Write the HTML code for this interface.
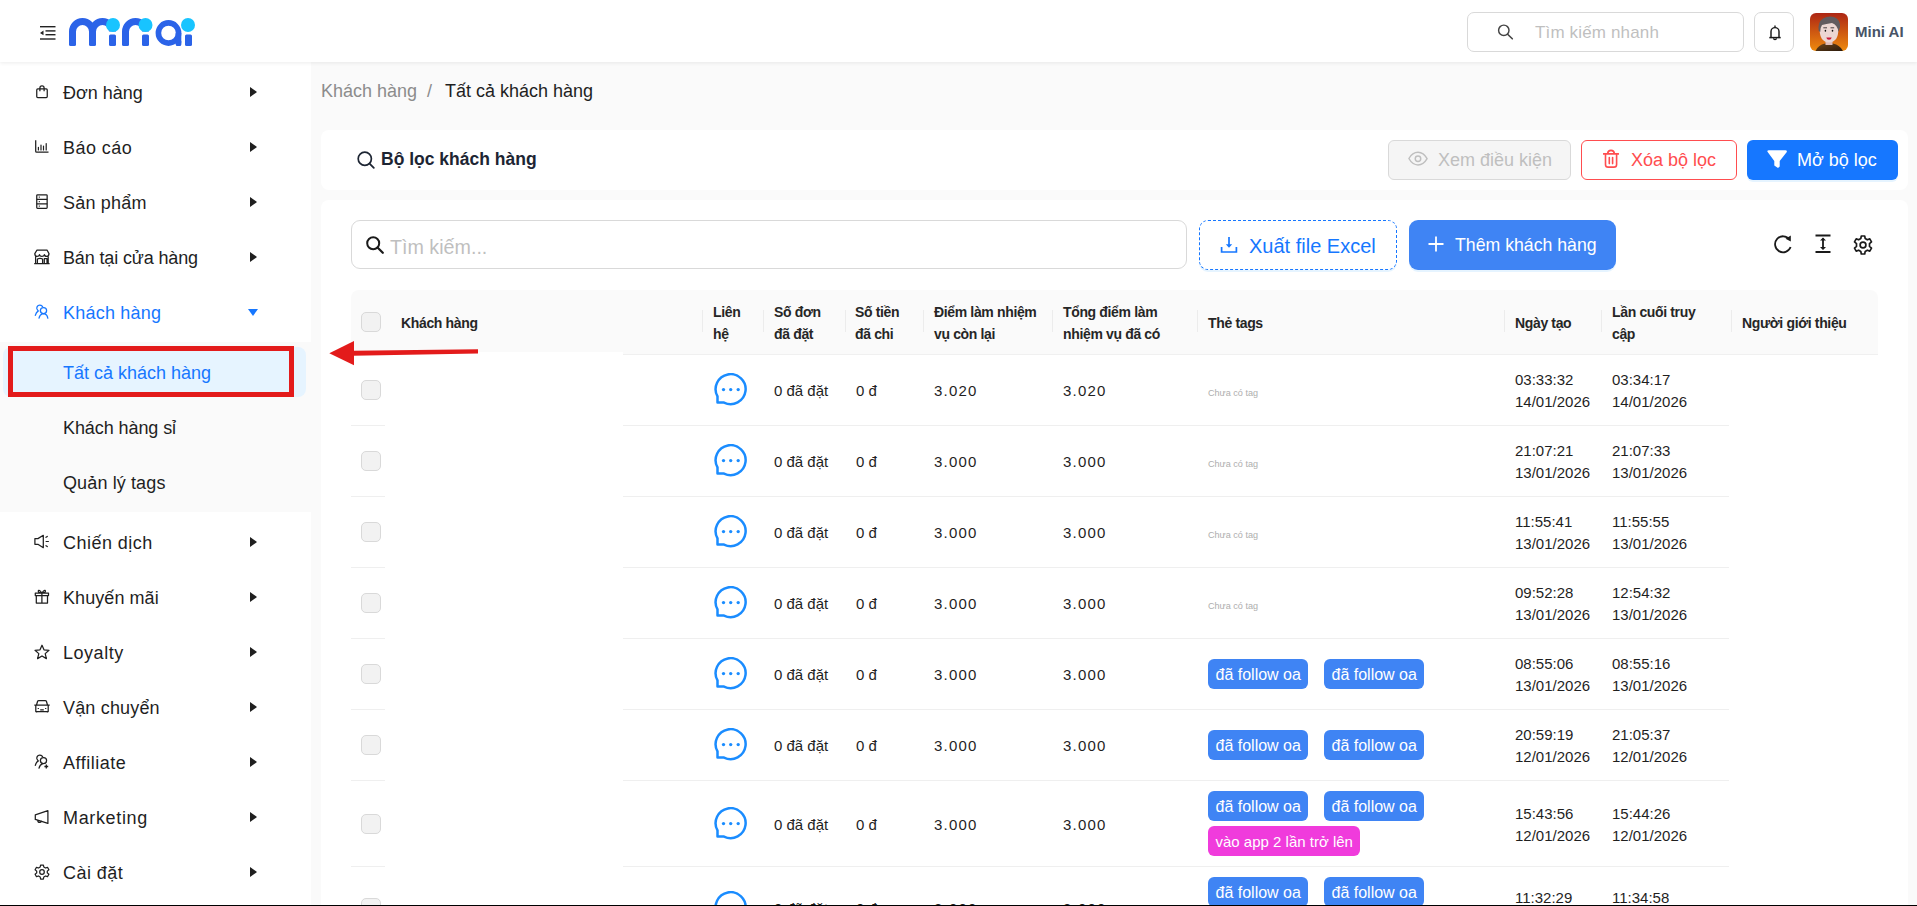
<!DOCTYPE html>
<html><head><meta charset="utf-8">
<style>
*{box-sizing:border-box;margin:0;padding:0}
html,body{width:1917px;height:906px;overflow:hidden;background:#fafafa;font-family:"Liberation Sans",sans-serif;color:#1f1f1f}
.a{position:absolute}
#top{left:0;top:0;width:1917px;height:62px;background:#fff;box-shadow:0 1px 4px rgba(0,0,0,0.08);z-index:5}
#side{left:0;top:62px;width:311px;height:844px;background:#fff}
.mi{position:absolute;left:0;width:311px;height:50px;line-height:50px;font-size:18px;color:#1f1f1f;white-space:nowrap}
.mi .t{position:absolute;left:63px;top:1px}
.mi svg.ic{position:absolute;left:34px;top:17px}
.car{position:absolute;left:250px;top:19.5px;width:0;height:0;border-top:5.5px solid transparent;border-bottom:5.5px solid transparent;border-left:7px solid #1f1f1f}
.card{position:absolute;background:#fff;border-radius:8px}
.btn{position:absolute;height:40px;border-radius:6px;font-size:18px;line-height:38px;white-space:nowrap}
.th{position:absolute;font-size:14px;letter-spacing:-0.35px;font-weight:bold;line-height:22px;color:#262626;white-space:nowrap}
.sep{position:absolute;top:310px;width:1px;height:22px;background:#ececec}
.rb{position:absolute;height:1px;background:#efefef}
.td{position:absolute;font-size:15px;line-height:22px;color:#1f1f1f;white-space:nowrap}
.cb{position:absolute;left:361px;width:20px;height:20px;border:1px solid #d9d9d9;background:#f2f2f2;border-radius:5px}
.tag{position:absolute;height:30px;line-height:32px;border-radius:6px;background:#3f84f4;color:#fff;font-size:16px;padding:0 7.5px;white-space:nowrap}
.nt{position:absolute;left:1208px;font-size:9.1px;color:#aeaeae;white-space:nowrap}
</style></head><body>

<!-- TOP BAR -->
<div id="top" class="a">
  <svg class="a" style="left:40px;top:26px" width="16" height="14" viewBox="0 0 16 14">
    <rect x="0" y="0" width="15.5" height="1.4" fill="#222"/>
    <rect x="5.5" y="4.2" width="10" height="1.4" fill="#222"/>
    <rect x="5.5" y="8" width="10" height="1.4" fill="#222"/>
    <rect x="0" y="12.3" width="15.5" height="1.4" fill="#222"/>
    <path d="M0 6.9 L3.5 4.6 L3.5 9.2Z" fill="#222"/>
  </svg>
  <!-- logo -->
  <svg class="a" style="left:66px;top:14px" width="132" height="36" viewBox="0 0 132 36">
    <g fill="none" stroke="#2b63e8" stroke-width="7">
      <path d="M6.5 30.5 V17.5 A10 10 0 0 1 26.5 17.5 V30.5"/>
      <path d="M26.5 17.5 A10 10 0 0 1 46.5 17.5"/>
      <path d="M59.5 30.5 V17.5 A10 10 0 0 1 79.5 17.5"/>
      <circle cx="102.5" cy="19" r="10.1" stroke-width="5.6"/>
      <path d="M112.5 19 V29.5" stroke-width="5.6"/>
    </g>
    <g fill="#2b63e8">
      <rect x="3" y="26" width="7" height="6" rx="1.5"/>
      <rect x="23" y="26" width="7" height="6" rx="1.5"/>
      <rect x="56" y="26" width="7" height="6" rx="1.5"/>
      <rect x="109.7" y="26" width="5.6" height="6" rx="1.5"/>
      <rect x="43" y="20.5" width="7" height="11.5" rx="1.5"/>
      <rect x="76" y="20.5" width="7" height="11.5" rx="1.5"/>
      <rect x="119" y="20.5" width="7" height="11.5" rx="1.5"/>
    </g>
    <g fill="#18c4ff">
      <circle cx="47" cy="11" r="7"/>
      <circle cx="79.5" cy="11" r="7"/>
      <circle cx="122" cy="11" r="7"/>
    </g>
  </svg>
  <!-- search -->
  <div class="a" style="left:1467px;top:12px;width:277px;height:40px;border:1px solid #d9d9d9;border-radius:7px;background:#fff"></div>
  <svg class="a" style="left:1497px;top:24px" width="17" height="16" viewBox="0 0 17 16">
    <circle cx="6.8" cy="6.3" r="5.2" fill="none" stroke="#444" stroke-width="1.45"/>
    <path d="M10.6 10.2 L15.3 14.8" stroke="#444" stroke-width="1.6" stroke-linecap="round"/>
  </svg>
  <div class="a" style="left:1535px;top:20.5px;font-size:17px;letter-spacing:0.15px;line-height:24px;color:#bfbfbf;white-space:nowrap">Tìm kiếm nhanh</div>
  <!-- bell -->
  <div class="a" style="left:1754px;top:12px;width:40px;height:40px;border:1px solid #d9d9d9;border-radius:7px;background:#fff"></div>
  <svg class="a" style="left:1766px;top:23px" width="18" height="20" viewBox="0 0 18 20">
    <path d="M5 14.5 V8.6 A4 4 0 0 1 13 8.6 V14.5" fill="none" stroke="#1a1a1a" stroke-width="1.45"/>
    <path d="M3.3 14.6 H14.7" stroke="#1a1a1a" stroke-width="1.5"/>
    <path d="M9 2.6 V4.6" stroke="#1a1a1a" stroke-width="1.4"/>
    <path d="M7.6 15.2 A1.4 1.4 0 0 0 10.4 15.2" fill="none" stroke="#1a1a1a" stroke-width="1.3"/>
  </svg>
  <!-- avatar -->
  <svg class="a" style="left:1810px;top:13px" width="38" height="38" viewBox="0 0 38 38">
    <defs>
      <linearGradient id="ag" x1="0" y1="0" x2="0" y2="1"><stop offset="0" stop-color="#ad2614"/><stop offset="1" stop-color="#ee8a0e"/></linearGradient>
      <linearGradient id="sh" x1="0" y1="0" x2="1" y2="1"><stop offset="0" stop-color="#6e4519"/><stop offset="1" stop-color="#2b1a0c"/></linearGradient>
      <clipPath id="ac"><rect x="0" y="0" width="38" height="38" rx="6"/></clipPath>
    </defs>
    <g clip-path="url(#ac)">
      <rect width="38" height="38" fill="url(#ag)"/>
      <path d="M5.5 38 Q8 32 15 30.5 H23 Q30 32 33 38 Z" fill="url(#sh)"/>
      <rect x="15.5" y="26" width="7" height="6" fill="#e0bdb9"/>
      <path d="M9.6 16 Q9.6 29 19 29.5 Q28.4 29 28.4 16 Q28 9 19 9 Q10 9 9.6 16Z" fill="#ecd6d3"/>
      <path d="M8.7 18 Q7.5 9 13 5.5 Q19 2 25 4.5 Q30.5 7 30 14 L28.5 19 Q27.5 12 22 10 Q16 11 12 12 Q10.5 14 10.2 19 Z" fill="#625b5f"/>
      <path d="M13.3 14.8 H17 M20.5 14.8 H24.2" stroke="#4a3f42" stroke-width="1"/>
      <ellipse cx="15.4" cy="17.8" rx="0.8" ry="1" fill="#111"/>
      <ellipse cx="22.5" cy="17.8" rx="0.8" ry="1" fill="#111"/>
      <path d="M16.3 24.6 H21.7 Q21.3 26.8 19 26.8 Q16.7 26.8 16.3 24.6Z" fill="#c8193a"/>
    </g>
  </svg>
  <div class="a" style="left:1855px;top:20px;font-size:15px;font-weight:bold;line-height:24px;color:#485466;white-space:nowrap">Mini AI</div>
</div>

<!-- SIDEBAR -->
<div id="side" class="a"></div>
<div class="a" style="left:0;top:342px;width:311px;height:170px;background:#fafafa"></div>
<div class="a" style="left:3px;top:347px;width:303px;height:50px;background:#e6f4ff;border-radius:8px"></div>
<div class="mi" style="top:67px"><svg class="ic" width="16" height="16" viewBox="0 0 16 16"><rect x="2.75" y="4.95" width="10.5" height="8.6" rx="1" fill="none" stroke="#1f1f1f" stroke-width="1.25"/><path d="M5.9 7.2 V3.9 Q5.9 1.9 8 1.9 Q10.1 1.9 10.1 3.9 V7.2" fill="none" stroke="#1f1f1f" stroke-width="1.25"/></svg><span class="t" style="letter-spacing:0px">Đơn hàng</span><div class="car"></div></div>
<div class="mi" style="top:122px"><svg class="ic" width="16" height="16" viewBox="0 0 16 16"><path d="M1.7 1.3 V12.3 Q1.7 13.2 2.6 13.2 H14.5" fill="none" stroke="#1f1f1f" stroke-width="1.25"/><path d="M4.4 8.3 V11 M7 6 V11 M9.5 7 V11 M12.2 4.5 V11" fill="none" stroke="#1f1f1f" stroke-width="1.2" stroke-linecap="round"/></svg><span class="t" style="letter-spacing:0.45px">Báo cáo</span><div class="car"></div></div>
<div class="mi" style="top:177px"><svg class="ic" width="16" height="16" viewBox="0 0 16 16"><rect x="2.75" y="0.8" width="10.4" height="13.6" rx="0.8" fill="none" stroke="#1f1f1f" stroke-width="1.25"/><path d="M2.75 5.4 H13.2 M2.75 9.9 H13.2 M4.8 3.2 H5.8 M4.8 7.7 H5.8 M4.8 12.2 H5.8" fill="none" stroke="#1f1f1f" stroke-width="1.25"/></svg><span class="t" style="letter-spacing:0.2px">Sản phẩm</span><div class="car"></div></div>
<div class="mi" style="top:232px"><svg class="ic" width="16" height="16" viewBox="0 0 16 16"><path d="M0.2 14.6 H15.6 M1.6 7.4 V14.6 M14.2 7.4 V14.6 M3 1 H13 L15 4.6 Q15 7.3 12.7 7.3 Q10.5 7.3 10.4 5.6 Q10 7.3 7.9 7.3 Q5.8 7.3 5.5 5.6 Q5.2 7.3 3 7.3 Q0.8 7.3 0.8 4.6 Z M3.4 14.6 V10.5 Q3.4 9.3 6 9.3 Q8.6 9.3 8.6 10.5 V14.6 M10.3 14.6 V9.5 H13 V14.6" fill="none" stroke="#1f1f1f" stroke-width="1.25" stroke-linejoin="round"/></svg><span class="t" style="letter-spacing:-0.14px">Bán tại cửa hàng</span><div class="car"></div></div>
<div class="mi" style="top:287px;color:#1677ff"><svg class="ic" width="16" height="16" viewBox="0 0 16 16"><path d="M8.6 2.4 Q6.3 0.6 4.2 1.5 Q2.5 2.7 2.9 4.7 Q3.3 6.2 4.3 6.9 Q2.1 8.3 1.3 11.4 M5 14.2 Q5.8 10.6 8.2 9.8 H10.8 Q13.4 10.7 13.8 14.2" fill="none" stroke="#1677ff" stroke-width="1.25" stroke-linecap="round"/><circle cx="9.5" cy="6.6" r="3.1" fill="none" stroke="#1677ff" stroke-width="1.25"/></svg><span class="t" style="letter-spacing:0.22px">Khách hàng</span><div class="card2" style="position:absolute;left:247.5px;top:22px;width:0;height:0;border-left:5.5px solid transparent;border-right:5.5px solid transparent;border-top:7px solid #1677ff"></div></div>
<div class="mi" style="top:517px"><svg class="ic" width="16" height="16" viewBox="0 0 16 16"><path d="M0.9 4.6 H3.9 L9.3 1.3 V13.7 L3.9 10.3 H0.9 Z" fill="none" stroke="#1f1f1f" stroke-width="1.25" stroke-linejoin="round"/><path d="M12 3.3 L13.3 2.4 M12.1 7.5 H14.4 M12 11.7 L13.3 12.6" fill="none" stroke="#1f1f1f" stroke-width="1.2" stroke-linecap="round"/></svg><span class="t" style="letter-spacing:0.47px">Chiến dịch</span><div class="car"></div></div>
<div class="mi" style="top:572px"><svg class="ic" width="16" height="16" viewBox="0 0 16 16"><path d="M1.3 4 H14.5 V6.6 H1.3 Z M2.3 6.6 V14 H13.5 V6.6 M7.9 4 V14 M7.9 4 Q5 0 4.3 2 Q3.9 3.6 7.9 4 Q11.8 3.6 11.4 2 Q10.7 0 7.9 4" fill="none" stroke="#1f1f1f" stroke-width="1.25" stroke-linejoin="round"/></svg><span class="t" style="letter-spacing:0.07px">Khuyến mãi</span><div class="car"></div></div>
<div class="mi" style="top:627px"><svg class="ic" width="16" height="16" viewBox="0 0 16 16"><path d="M8 1.2 L10 5.8 L15 6.3 L11.2 9.6 L12.4 14.6 L8 12 L3.6 14.6 L4.8 9.6 L1 6.3 L6 5.8 Z" fill="none" stroke="#1f1f1f" stroke-width="1.25" stroke-linejoin="round"/></svg><span class="t" style="letter-spacing:0.53px">Loyalty</span><div class="car"></div></div>
<div class="mi" style="top:682px"><svg class="ic" width="16" height="16" viewBox="0 0 16 16"><path d="M2.5 6 L3.6 2.3 Q3.9 1.5 4.8 1.5 H11.2 Q12.1 1.5 12.4 2.3 L13.5 6 M1.8 6 H14.2 V12.6 H1.8 Z M0.3 6.2 H1.8 M14.2 6.2 H15.7 M4.3 9 V10 M11.7 9 V10 M6.2 10.8 H9.8 M2.6 12.6 V13.6 M13.4 12.6 V13.6" fill="none" stroke="#1f1f1f" stroke-width="1.25" stroke-linejoin="round"/></svg><span class="t" style="letter-spacing:0.17px">Vận chuyển</span><div class="car"></div></div>
<div class="mi" style="top:737px"><svg class="ic" width="16" height="16" viewBox="0 0 16 16"><path d="M8.6 2.4 Q6.3 0.6 4.2 1.5 Q2.5 2.7 2.9 4.7 Q3.3 6.2 4.3 6.9 Q2.1 8.3 1.3 11.4 M5 14.2 Q5.8 10.6 8.8 9.6" fill="none" stroke="#1f1f1f" stroke-width="1.25" stroke-linecap="round"/><circle cx="9.5" cy="6.6" r="3.1" fill="none" stroke="#1f1f1f" stroke-width="1.25"/><path d="M12.3 10.6 V14.4 M10.4 12.5 H14.2" stroke="#1f1f1f" stroke-width="1.3"/></svg><span class="t" style="letter-spacing:0.52px">Affiliate</span><div class="car"></div></div>
<div class="mi" style="top:792px"><svg class="ic" width="16" height="16" viewBox="0 0 16 16"><path d="M1.3 5.8 L13.9 1.6 V14.4 L1.3 10.4 Z M3.8 11.2 Q3.6 13.6 6 13.4 Q7.4 13.2 7.2 11.9" fill="none" stroke="#1f1f1f" stroke-width="1.25" stroke-linejoin="round"/></svg><span class="t" style="letter-spacing:0.65px">Marketing</span><div class="car"></div></div>
<div class="mi" style="top:847px"><svg class="ic" width="16" height="16" viewBox="0 0 16 16"><path d="M6.6 1 H9.4 L9.8 3 L11.5 4 L13.5 3.3 L14.9 5.7 L13.3 7.1 V8.9 L14.9 10.3 L13.5 12.7 L11.5 12 L9.8 13 L9.4 15 H6.6 L6.2 13 L4.5 12 L2.5 12.7 L1.1 10.3 L2.7 8.9 V7.1 L1.1 5.7 L2.5 3.3 L4.5 4 L6.2 3 Z" fill="none" stroke="#1f1f1f" stroke-width="1.25" stroke-linejoin="round"/><circle cx="8" cy="8" r="2.3" fill="none" stroke="#1f1f1f" stroke-width="1.25"/></svg><span class="t" style="letter-spacing:0.45px">Cài đặt</span><div class="car"></div></div>
<div class="mi" style="top:347px;color:#1677ff"><span class="t" style="letter-spacing:0px">Tất cả khách hàng</span></div>
<div class="mi" style="top:402px;color:#1f1f1f"><span class="t" style="letter-spacing:-0.08px">Khách hàng sỉ</span></div>
<div class="mi" style="top:457px;color:#1f1f1f"><span class="t" style="letter-spacing:0.12px">Quản lý tags</span></div>

<!-- MAIN -->
<div class="a" style="left:321px;top:79px;font-size:18px;line-height:24px;color:#8c8c8c;white-space:nowrap">Khách hàng</div>
<div class="a" style="left:427px;top:79px;font-size:18px;line-height:24px;color:#8c8c8c">/</div>
<div class="a" style="left:445px;top:79px;font-size:18px;line-height:24px;color:#1f1f1f;white-space:nowrap">Tất cả khách hàng</div>

<div class="card" style="left:321px;top:130px;width:1587px;height:60px"></div>
<svg class="a" style="left:357px;top:151px" width="18" height="18" viewBox="0 0 18 18">
  <circle cx="7.8" cy="7.8" r="6.6" fill="none" stroke="#1d2533" stroke-width="1.7"/>
  <path d="M12.6 12.6 L16.8 16.8" stroke="#1d2533" stroke-width="1.8" stroke-linecap="round"/>
</svg>
<div class="a" style="left:381px;top:147px;font-size:17.5px;font-weight:bold;line-height:24px;color:#1d2533;white-space:nowrap">Bộ lọc khách hàng</div>

<div class="btn" style="left:1388px;top:140px;width:183px;border:1px solid #d9d9d9;background:#f5f5f5;color:#bfbfbf"></div>
<svg class="a" style="left:1408px;top:150px" width="20" height="17" viewBox="0 0 20 17">
  <path d="M0.9 8.5 C3.5 3.8 6.5 2.2 10 2.2 C13.5 2.2 16.5 3.8 19.1 8.7 C16.5 13.2 13.5 14.9 10 14.9 C6.5 14.9 3.5 13.2 0.9 8.5 Z" fill="none" stroke="#bfbfbf" stroke-width="1.45" stroke-linejoin="round"/>
  <circle cx="10" cy="8.7" r="2.75" fill="none" stroke="#bfbfbf" stroke-width="1.45"/>
</svg>
<div class="a" style="left:1438px;top:148px;font-size:18px;line-height:24px;color:#bfbfbf;white-space:nowrap">Xem điều kiện</div>

<div class="btn" style="left:1581px;top:140px;width:156px;border:1px solid #ff4d4f;background:#fff"></div>
<svg class="a" style="left:1603px;top:149px" width="16" height="20" viewBox="0 0 16 20">
  <path d="M0.4 4.9 H15.6 M4.6 4.7 Q4.9 1.4 8 1.4 Q11.1 1.4 11.4 4.7 M2.5 4.9 V15.4 Q2.5 18.1 5.1 18.1 H10.9 Q13.6 18.1 13.6 15.4 V4.9 M6.3 8.6 V14.6 M9.6 8.6 V14.6" fill="none" stroke="#ff4d4f" stroke-width="1.6" stroke-linecap="round"/>
</svg>
<div class="a" style="left:1631px;top:148px;font-size:18px;line-height:24px;color:#ff4d4f;white-space:nowrap">Xóa bộ lọc</div>

<div class="btn" style="left:1747px;top:140px;width:151px;background:#1677ff;box-shadow:0 2px 0 rgba(5,145,255,0.1)"></div>
<svg class="a" style="left:1767px;top:150px" width="21" height="19" viewBox="0 0 21 19">
  <path d="M0.3 1.6 Q0.3 0.3 1.8 0.3 H18.4 Q20.2 0.3 19.8 1.9 L12.7 11 V16.6 L11 17.9 L7.3 15.6 V11 Z" fill="#fff"/>
</svg>
<div class="a" style="left:1797px;top:148px;font-size:18px;line-height:24px;color:#fff;white-space:nowrap">Mở bộ lọc</div>

<div class="card" style="left:321px;top:200px;width:1587px;height:720px"></div>
<div class="a" style="left:351px;top:220px;width:836px;height:49px;border:1px solid #d9d9d9;border-radius:9px;background:#fff"></div>
<svg class="a" style="left:366px;top:236px" width="18" height="18" viewBox="0 0 18 18">
  <circle cx="7.2" cy="7.2" r="6" fill="none" stroke="#1a1a1a" stroke-width="2"/>
  <path d="M11.5 11.5 L16.8 16.8" stroke="#1a1a1a" stroke-width="2.2" stroke-linecap="round"/>
</svg>
<div class="a" style="left:390px;top:234.5px;font-size:19.7px;line-height:24px;color:#bfbfbf;white-space:nowrap">Tìm kiếm...</div>

<div class="a" style="left:1199px;top:220px;width:198px;height:50px;border:1px dashed #1677ff;border-radius:9px;background:#fff;box-shadow:0 2px 0 rgba(5,145,255,0.1)"></div>
<svg class="a" style="left:1219px;top:236px" width="20" height="18" viewBox="0 0 20 18">
  <path d="M10 1 V9.5" stroke="#1677ff" stroke-width="1.7"/>
  <path d="M6.8 8.3 L10 11.8 L13.2 8.3 Z" fill="#1677ff"/>
  <path d="M2.6 11 V16 H17.4 V11" fill="none" stroke="#1677ff" stroke-width="1.7"/>
</svg>
<div class="a" style="left:1249px;top:234px;font-size:20px;line-height:24px;color:#1677ff;white-space:nowrap">Xuất file Excel</div>

<div class="a" style="left:1409px;top:220px;width:207px;height:50px;border-radius:9px;background:#3f84f4;box-shadow:0 2px 0 rgba(5,145,255,0.1)"></div>
<svg class="a" style="left:1428px;top:236px" width="16" height="16" viewBox="0 0 16 16">
  <path d="M8 0.5 V15.5 M0.5 8 H15.5" stroke="#fff" stroke-width="1.8"/>
</svg>
<div class="a" style="left:1455px;top:233px;font-size:17.7px;line-height:24px;color:#fff;white-space:nowrap">Thêm khách hàng</div>

<svg class="a" style="left:1773px;top:234px" width="20" height="20" viewBox="0 0 20 20">
  <path d="M16.5 5.5 A8 8 0 1 0 17.6 13" fill="none" stroke="#1a1a1a" stroke-width="1.8"/>
  <path d="M12.5 4.8 L17.8 1.5 L17.8 7.5 Z" fill="#1a1a1a"/>
</svg>
<svg class="a" style="left:1814px;top:234px" width="18" height="20" viewBox="0 0 18 20">
  <path d="M1.5 1.5 H16.5 M1.5 18 H16.5 M9 4.5 V15" stroke="#1a1a1a" stroke-width="1.8"/>
  <path d="M6 6.5 L9 3.5 L12 6.5Z M6 13 L9 16 L12 13Z" fill="#1a1a1a"/>
</svg>
<svg class="a" style="left:1853px;top:235px" width="20" height="20" viewBox="0 0 20 20">
  <path d="M8.3 1 H11.7 L12.2 3.6 L14.3 4.8 L16.8 3.9 L18.5 6.9 L16.5 8.6 V11.4 L18.5 13.1 L16.8 16.1 L14.3 15.2 L12.2 16.4 L11.7 19 H8.3 L7.8 16.4 L5.7 15.2 L3.2 16.1 L1.5 13.1 L3.5 11.4 V8.6 L1.5 6.9 L3.2 3.9 L5.7 4.8 L7.8 3.6 Z" fill="none" stroke="#1a1a1a" stroke-width="1.7" stroke-linejoin="round"/>
  <circle cx="10" cy="10" r="2.9" fill="none" stroke="#1a1a1a" stroke-width="1.7"/>
</svg>

<!-- TABLE HEADER -->
<div class="a" style="left:351px;top:290px;width:1527px;height:64px;background:#fafafa;border-radius:8px 8px 0 0"></div>
<div class="rb" style="left:351px;top:354px;width:1527px;background:#f0f0f0"></div>
<div class="sep" style="left:702px"></div>
<div class="sep" style="left:763px"></div>
<div class="sep" style="left:845px"></div>
<div class="sep" style="left:923px"></div>
<div class="sep" style="left:1052px"></div>
<div class="sep" style="left:1197px"></div>
<div class="sep" style="left:1504px"></div>
<div class="sep" style="left:1601px"></div>
<div class="sep" style="left:1731px"></div>
<div class="cb" style="top:312px"></div>
<div class="th" style="left:401px;top:312.2px">Khách hàng</div>
<div class="th" style="left:713px;top:301.2px">Liên<br>hệ</div>
<div class="th" style="left:774px;top:301.2px">Số đơn<br>đã đặt</div>
<div class="th" style="left:855px;top:301.2px">Số tiền<br>đã chi</div>
<div class="th" style="left:934px;top:301.2px">Điểm làm nhiệm<br>vụ còn lại</div>
<div class="th" style="left:1063px;top:301.2px">Tổng điểm làm<br>nhiệm vụ đã có</div>
<div class="th" style="left:1208px;top:312.2px">Thẻ tags</div>
<div class="th" style="left:1515px;top:312.2px">Ngày tạo</div>
<div class="th" style="left:1612px;top:301.2px">Lần cuối truy<br>cập</div>
<div class="th" style="left:1742px;top:312.2px">Người giới thiệu</div>
<div class="rb" style="left:351px;top:425px;width:1378px"></div>
<div class="cb" style="top:380.0px"></div>
<svg class="a" style="left:712px;top:373.0px" width="36" height="34" viewBox="0 0 36 34"><path d="M5.5 23.4 V29.6 H12 A15 15 0 1 0 5.5 23.4 Z" fill="none" stroke="#1a8cff" stroke-width="2.5" stroke-linejoin="round"/><circle cx="11.5" cy="16.6" r="1.65" fill="#1a8cff"/><circle cx="18.7" cy="16.6" r="1.65" fill="#1a8cff"/><circle cx="26.2" cy="16.6" r="1.65" fill="#1a8cff"/></svg>
<div class="td" style="left:774px;top:380.0px">0 đã đặt</div>
<div class="td" style="left:856px;top:380.0px">0 đ</div>
<div class="td" style="left:934px;top:380.0px;letter-spacing:1.2px">3.020</div>
<div class="td" style="left:1063px;top:380.0px;letter-spacing:1.2px">3.020</div>
<div class="td" style="left:1515px;top:369.0px">03:33:32<br>14/01/2026</div>
<div class="td" style="left:1612px;top:369.0px">03:34:17<br>14/01/2026</div>
<div class="nt" style="top:386.8px;line-height:12px">Chưa có tag</div>
<div class="rb" style="left:351px;top:496px;width:1378px"></div>
<div class="cb" style="top:451.0px"></div>
<svg class="a" style="left:712px;top:444.0px" width="36" height="34" viewBox="0 0 36 34"><path d="M5.5 23.4 V29.6 H12 A15 15 0 1 0 5.5 23.4 Z" fill="none" stroke="#1a8cff" stroke-width="2.5" stroke-linejoin="round"/><circle cx="11.5" cy="16.6" r="1.65" fill="#1a8cff"/><circle cx="18.7" cy="16.6" r="1.65" fill="#1a8cff"/><circle cx="26.2" cy="16.6" r="1.65" fill="#1a8cff"/></svg>
<div class="td" style="left:774px;top:451.0px">0 đã đặt</div>
<div class="td" style="left:856px;top:451.0px">0 đ</div>
<div class="td" style="left:934px;top:451.0px;letter-spacing:1.2px">3.000</div>
<div class="td" style="left:1063px;top:451.0px;letter-spacing:1.2px">3.000</div>
<div class="td" style="left:1515px;top:440.0px">21:07:21<br>13/01/2026</div>
<div class="td" style="left:1612px;top:440.0px">21:07:33<br>13/01/2026</div>
<div class="nt" style="top:457.8px;line-height:12px">Chưa có tag</div>
<div class="rb" style="left:351px;top:567px;width:1378px"></div>
<div class="cb" style="top:522.0px"></div>
<svg class="a" style="left:712px;top:515.0px" width="36" height="34" viewBox="0 0 36 34"><path d="M5.5 23.4 V29.6 H12 A15 15 0 1 0 5.5 23.4 Z" fill="none" stroke="#1a8cff" stroke-width="2.5" stroke-linejoin="round"/><circle cx="11.5" cy="16.6" r="1.65" fill="#1a8cff"/><circle cx="18.7" cy="16.6" r="1.65" fill="#1a8cff"/><circle cx="26.2" cy="16.6" r="1.65" fill="#1a8cff"/></svg>
<div class="td" style="left:774px;top:522.0px">0 đã đặt</div>
<div class="td" style="left:856px;top:522.0px">0 đ</div>
<div class="td" style="left:934px;top:522.0px;letter-spacing:1.2px">3.000</div>
<div class="td" style="left:1063px;top:522.0px;letter-spacing:1.2px">3.000</div>
<div class="td" style="left:1515px;top:511.0px">11:55:41<br>13/01/2026</div>
<div class="td" style="left:1612px;top:511.0px">11:55:55<br>13/01/2026</div>
<div class="nt" style="top:528.8px;line-height:12px">Chưa có tag</div>
<div class="rb" style="left:351px;top:638px;width:1378px"></div>
<div class="cb" style="top:593.0px"></div>
<svg class="a" style="left:712px;top:586.0px" width="36" height="34" viewBox="0 0 36 34"><path d="M5.5 23.4 V29.6 H12 A15 15 0 1 0 5.5 23.4 Z" fill="none" stroke="#1a8cff" stroke-width="2.5" stroke-linejoin="round"/><circle cx="11.5" cy="16.6" r="1.65" fill="#1a8cff"/><circle cx="18.7" cy="16.6" r="1.65" fill="#1a8cff"/><circle cx="26.2" cy="16.6" r="1.65" fill="#1a8cff"/></svg>
<div class="td" style="left:774px;top:593.0px">0 đã đặt</div>
<div class="td" style="left:856px;top:593.0px">0 đ</div>
<div class="td" style="left:934px;top:593.0px;letter-spacing:1.2px">3.000</div>
<div class="td" style="left:1063px;top:593.0px;letter-spacing:1.2px">3.000</div>
<div class="td" style="left:1515px;top:582.0px">09:52:28<br>13/01/2026</div>
<div class="td" style="left:1612px;top:582.0px">12:54:32<br>13/01/2026</div>
<div class="nt" style="top:599.8px;line-height:12px">Chưa có tag</div>
<div class="rb" style="left:351px;top:709px;width:1378px"></div>
<div class="cb" style="top:664.0px"></div>
<svg class="a" style="left:712px;top:657.0px" width="36" height="34" viewBox="0 0 36 34"><path d="M5.5 23.4 V29.6 H12 A15 15 0 1 0 5.5 23.4 Z" fill="none" stroke="#1a8cff" stroke-width="2.5" stroke-linejoin="round"/><circle cx="11.5" cy="16.6" r="1.65" fill="#1a8cff"/><circle cx="18.7" cy="16.6" r="1.65" fill="#1a8cff"/><circle cx="26.2" cy="16.6" r="1.65" fill="#1a8cff"/></svg>
<div class="td" style="left:774px;top:664.0px">0 đã đặt</div>
<div class="td" style="left:856px;top:664.0px">0 đ</div>
<div class="td" style="left:934px;top:664.0px;letter-spacing:1.2px">3.000</div>
<div class="td" style="left:1063px;top:664.0px;letter-spacing:1.2px">3.000</div>
<div class="td" style="left:1515px;top:653.0px">08:55:06<br>13/01/2026</div>
<div class="td" style="left:1612px;top:653.0px">08:55:16<br>13/01/2026</div>
<div class="tag" style="left:1208px;top:659.0px">đã follow oa</div>
<div class="tag" style="left:1324px;top:659.0px">đã follow oa</div>
<div class="rb" style="left:351px;top:780px;width:1378px"></div>
<div class="cb" style="top:735.0px"></div>
<svg class="a" style="left:712px;top:728.0px" width="36" height="34" viewBox="0 0 36 34"><path d="M5.5 23.4 V29.6 H12 A15 15 0 1 0 5.5 23.4 Z" fill="none" stroke="#1a8cff" stroke-width="2.5" stroke-linejoin="round"/><circle cx="11.5" cy="16.6" r="1.65" fill="#1a8cff"/><circle cx="18.7" cy="16.6" r="1.65" fill="#1a8cff"/><circle cx="26.2" cy="16.6" r="1.65" fill="#1a8cff"/></svg>
<div class="td" style="left:774px;top:735.0px">0 đã đặt</div>
<div class="td" style="left:856px;top:735.0px">0 đ</div>
<div class="td" style="left:934px;top:735.0px;letter-spacing:1.2px">3.000</div>
<div class="td" style="left:1063px;top:735.0px;letter-spacing:1.2px">3.000</div>
<div class="td" style="left:1515px;top:724.0px">20:59:19<br>12/01/2026</div>
<div class="td" style="left:1612px;top:724.0px">21:05:37<br>12/01/2026</div>
<div class="tag" style="left:1208px;top:730.0px">đã follow oa</div>
<div class="tag" style="left:1324px;top:730.0px">đã follow oa</div>
<div class="rb" style="left:351px;top:866px;width:1378px"></div>
<div class="cb" style="top:813.5px"></div>
<svg class="a" style="left:712px;top:806.5px" width="36" height="34" viewBox="0 0 36 34"><path d="M5.5 23.4 V29.6 H12 A15 15 0 1 0 5.5 23.4 Z" fill="none" stroke="#1a8cff" stroke-width="2.5" stroke-linejoin="round"/><circle cx="11.5" cy="16.6" r="1.65" fill="#1a8cff"/><circle cx="18.7" cy="16.6" r="1.65" fill="#1a8cff"/><circle cx="26.2" cy="16.6" r="1.65" fill="#1a8cff"/></svg>
<div class="td" style="left:774px;top:813.5px">0 đã đặt</div>
<div class="td" style="left:856px;top:813.5px">0 đ</div>
<div class="td" style="left:934px;top:813.5px;letter-spacing:1.2px">3.000</div>
<div class="td" style="left:1063px;top:813.5px;letter-spacing:1.2px">3.000</div>
<div class="td" style="left:1515px;top:802.5px">15:43:56<br>12/01/2026</div>
<div class="td" style="left:1612px;top:802.5px">15:44:26<br>12/01/2026</div>
<div class="tag" style="left:1208px;top:791.0px">đã follow oa</div>
<div class="tag" style="left:1324px;top:791.0px">đã follow oa</div>
<div class="tag" style="left:1208px;top:826.0px;background:#f03bdc;font-size:15px">vào app 2 lần trở lên</div>
<div class="cb" style="top:897.5px"></div>
<svg class="a" style="left:712px;top:890.5px" width="36" height="34" viewBox="0 0 36 34"><path d="M5.5 23.4 V29.6 H12 A15 15 0 1 0 5.5 23.4 Z" fill="none" stroke="#1a8cff" stroke-width="2.5" stroke-linejoin="round"/><circle cx="11.5" cy="16.6" r="1.65" fill="#1a8cff"/><circle cx="18.7" cy="16.6" r="1.65" fill="#1a8cff"/><circle cx="26.2" cy="16.6" r="1.65" fill="#1a8cff"/></svg>
<div class="td" style="left:774px;top:897.5px">0 đã đặt</div>
<div class="td" style="left:856px;top:897.5px">0 đ</div>
<div class="td" style="left:934px;top:897.5px;letter-spacing:1.2px">3.000</div>
<div class="td" style="left:1063px;top:897.5px;letter-spacing:1.2px">3.000</div>
<div class="td" style="left:1515px;top:886.5px">11:32:29<br>12/01/2026</div>
<div class="td" style="left:1612px;top:886.5px">11:34:58<br>12/01/2026</div>
<div class="tag" style="left:1208px;top:877.0px">đã follow oa</div>
<div class="tag" style="left:1324px;top:877.0px">đã follow oa</div>
<div class="tag" style="left:1208px;top:912.0px;background:#f03bdc;font-size:15px">vào app 2 lần trở lên</div>

<!-- white cover over customer column -->
<div class="a" style="left:385px;top:352px;width:238px;height:560px;background:#fff"></div>

<!-- annotation -->
<div class="a" style="left:8px;top:346px;width:286px;height:51px;border:5px solid #e31b1b"></div>
<svg class="a" style="left:325px;top:336px" width="160" height="34" viewBox="0 0 160 34">
  <path d="M4.3 17.3 L29 5 L29 29.3 Z" fill="#e31b1b"/>
  <path d="M28 14.8 L153 13.2 L153 17.5 L28 19.7 Z" fill="#e31b1b"/>
</svg>

<div class="a" style="left:0;top:905px;width:1917px;height:1px;background:#000"></div>
</body></html>
